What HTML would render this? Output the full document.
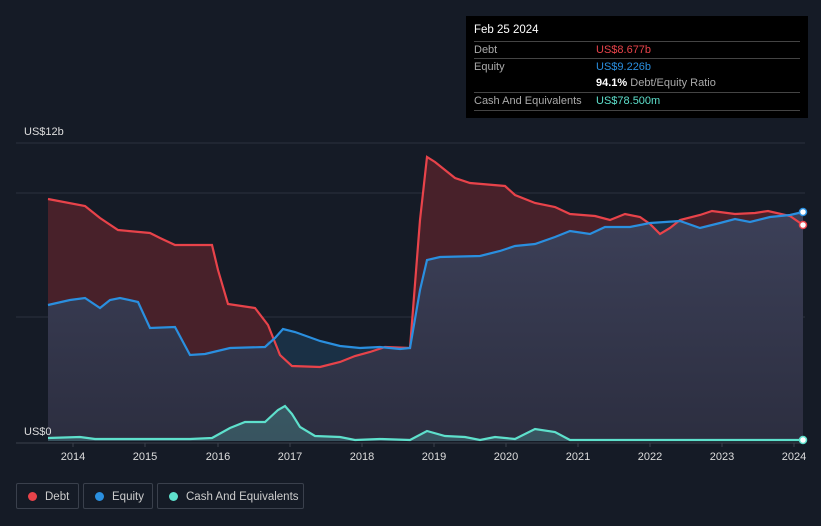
<!DOCTYPE html>
<html><head><meta charset="utf-8"><style>
body{margin:0;width:821px;height:526px;background:#151b26;font-family:"Liberation Sans",sans-serif;overflow:hidden;position:relative}
.tt{position:absolute;left:466px;top:16px;width:342px;height:102px;background:#000;color:#fff;font-size:11px}
.tt .r{position:absolute;left:8px;right:8px;border-top:1px solid #444;height:17px;line-height:17px;color:#aaa}
.leg{position:absolute;top:483px;height:26px;border:1px solid #3a404c;border-radius:2px;color:#ccc;font-size:11.5px;line-height:26px;box-sizing:border-box}
.leg i{position:absolute;left:11px;top:8px;width:9px;height:9px;border-radius:50%}
.leg span{position:absolute;left:28px}
.yr{position:absolute;top:451px;color:#ddd;font-size:11px;width:40px;text-align:center}
</style></head><body>
<svg width="821" height="526" style="position:absolute;left:0;top:0">
<defs><linearGradient id="g" x1="0" y1="0" x2="0" y2="1"><stop offset="0" stop-color="#3c4058"/><stop offset="1" stop-color="#2c2e40"/></linearGradient></defs>
<line x1="16" y1="143" x2="805" y2="143" stroke="#2c323e"/>
<line x1="16" y1="193" x2="805" y2="193" stroke="#2c323e"/>
<line x1="16" y1="317" x2="805" y2="317" stroke="#2c323e"/>
<path fill="#48212a" d="M48,199 L85,206 100,218 118,230 150,233 160,238 175,245 212,245 218,270 228,304 255,308 268,325 280,355 292,366 320,367 340,362 355,356 370,352 385,347 410,348 420,220 427,157 435,162 455,178 470,183 505,186 515,195 535,203 555,207 570,214 595,216 610,220 625,214 640,217 650,224 660,234 670,228 680,220 700,215 712,211 735,214 755,213 768,211 790,216 803,225 L803,441 L48,441Z"/>
<path fill="#1a3045" d="M48,305 L70,300 85,298 100,308 110,300 120,298 138,302 150,328 175,327 190,355 205,354 230,348 265,347 275,338 283,329 295,332 320,341 340,346 360,348 380,347 400,349 410,348 420,290 427,260 440,257 480,256 500,251 515,246 535,244 555,237 570,231 590,234 605,227 630,227 650,223 680,221 700,228 720,223 735,219 750,222 770,217 790,215 803,212 L803,441 L48,441Z"/>
<path fill="url(#g)" d="M48,305 L70,300 85,298 100,308 110,300 120,298 138,302 150,328 175,327 190,355 205,354 230,348 265,347 268,340 273,347 280,355 292,366 320,367 340,362 355,356 370,352 385,347 410,348 420,290 427,260 440,257 480,256 500,251 515,246 535,244 555,237 570,231 590,234 605,227 630,227 650,223 660,234 670,228 680,221 700,228 720,223 735,219 750,222 770,217 790,215 803,222 L803,441 L48,441Z"/>
<path fill="url(#g)" d="M648,441 L650,224 660,234 670,228 680,221 700,228 720,223 735,219 750,222 770,217 790,215 803,212 L803,441Z"/>
<path fill="rgba(90,200,190,0.25)" d="M48,438 L80,437 95,439 190,439 212,438 230,428 245,422 265,422 278,410 285,406 292,414 300,427 315,436 340,437 355,440 380,439 410,440 427,431 445,436 465,437 480,440 495,437 515,439 535,429 555,432 570,440 803,440 803,441 48,441Z"/>
<polyline fill="none" stroke="#e8434a" stroke-width="2.2" points="48,199 85,206 100,218 118,230 150,233 160,238 175,245 212,245 218,270 228,304 255,308 268,325 280,355 292,366 320,367 340,362 355,356 370,352 385,347 410,348 420,220 427,157 435,162 455,178 470,183 505,186 515,195 535,203 555,207 570,214 595,216 610,220 625,214 640,217 650,224 660,234 670,228 680,220 700,215 712,211 735,214 755,213 768,211 790,216 803,225"/>
<polyline fill="none" stroke="#2a8fdf" stroke-width="2.2" points="48,305 70,300 85,298 100,308 110,300 120,298 138,302 150,328 175,327 190,355 205,354 230,348 265,347 275,338 283,329 295,332 320,341 340,346 360,348 380,347 400,349 410,348 420,290 427,260 440,257 480,256 500,251 515,246 535,244 555,237 570,231 590,234 605,227 630,227 650,223 680,221 700,228 720,223 735,219 750,222 770,217 790,215 803,212"/>
<polyline fill="none" stroke="#5ee0cc" stroke-width="2.2" points="48,438 80,437 95,439 190,439 212,438 230,428 245,422 265,422 278,410 285,406 292,414 300,427 315,436 340,437 355,440 380,439 410,440 427,431 445,436 465,437 480,440 495,437 515,439 535,429 555,432 570,440 803,440"/>
<line x1="16" y1="443" x2="805" y2="443" stroke="#3a404c"/>
<circle cx="803" cy="225" r="3.5" fill="#fff" stroke="#e8434a" stroke-width="1.5"/>
<circle cx="803" cy="212" r="3.5" fill="#fff" stroke="#2a8fdf" stroke-width="1.5"/>
<circle cx="803" cy="440" r="3.5" fill="#fff" stroke="#5ee0cc" stroke-width="1.5"/>
<g stroke="#3a404c"><line x1="73" y1="443" x2="73" y2="447"/><line x1="145" y1="443" x2="145" y2="447"/><line x1="218" y1="443" x2="218" y2="447"/><line x1="290" y1="443" x2="290" y2="447"/><line x1="362" y1="443" x2="362" y2="447"/><line x1="434" y1="443" x2="434" y2="447"/><line x1="506" y1="443" x2="506" y2="447"/><line x1="578" y1="443" x2="578" y2="447"/><line x1="650" y1="443" x2="650" y2="447"/><line x1="722" y1="443" x2="722" y2="447"/><line x1="794" y1="443" x2="794" y2="447"/></g>
<text x="24" y="135" fill="#ddd" font-size="11" font-family="Liberation Sans">US$12b</text>
<text x="24" y="435" fill="#ddd" font-size="11" font-family="Liberation Sans">US$0</text>
</svg>
<div class="yr" style="left:53px">2014</div><div class="yr" style="left:125px">2015</div><div class="yr" style="left:198px">2016</div><div class="yr" style="left:270px">2017</div><div class="yr" style="left:342px">2018</div><div class="yr" style="left:414px">2019</div><div class="yr" style="left:486px">2020</div><div class="yr" style="left:558px">2021</div><div class="yr" style="left:630px">2022</div><div class="yr" style="left:702px">2023</div><div class="yr" style="left:774px">2024</div>
<div class="tt">
<div style="position:absolute;left:8px;top:8px;font-size:11.5px">Feb 25 2024</div>
<div class="r" style="top:25px">Debt<b style="position:absolute;left:122px;color:#e8434a;font-weight:normal">US$8.677b</b></div>
<div class="r" style="top:42px">Equity<b style="position:absolute;left:122px;color:#2a8fdf;font-weight:normal">US$9.226b</b></div>
<div class="r" style="top:59px;border:0"><span style="position:absolute;left:122px"><b style="color:#fff">94.1%</b> Debt/Equity Ratio</span></div>
<div class="r" style="top:76px">Cash And Equivalents<b style="position:absolute;left:122px;color:#5ee0cc;font-weight:normal">US$78.500m</b></div>
<div class="r" style="top:94px;height:0"></div>
</div>
<div class="leg" style="left:16px;width:63px"><i style="background:#e8434a"></i><span>Debt</span></div>
<div class="leg" style="left:83px;width:70px"><i style="background:#2a8fdf"></i><span>Equity</span></div>
<div class="leg" style="left:157px;width:147px"><i style="background:#5ee0cc"></i><span>Cash And Equivalents</span></div>
</body></html>
